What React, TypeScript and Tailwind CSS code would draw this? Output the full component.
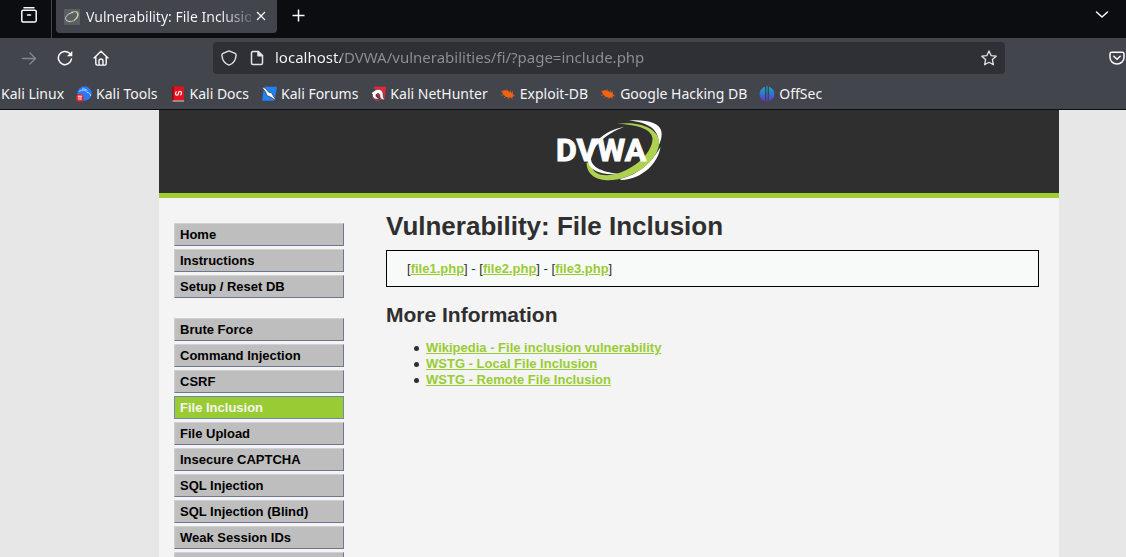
import React from "react";

const LINK = "font-bold text-[#9c3] underline";

function ArchiveIcon() {
  return (
    <svg width="18" height="18" viewBox="0 0 18 18" fill="none" stroke="#fbfbfe" strokeWidth="1.5" strokeLinecap="round" strokeLinejoin="round">
      <path d="M4 1.7h10M1.8 5.5c0-.8.5-1.3 1.3-1.3h11.8c.8 0 1.3.5 1.3 1.3v9c0 .9-.6 1.6-1.6 1.6H3.4c-1 0-1.6-.7-1.6-1.6zM7.5 9h3" />
    </svg>
  );
}

function Favicon() {
  return (
    <svg width="16" height="16" viewBox="0 0 16 16" fill="none">
      <rect width="16" height="16" rx="1" fill="#5b5e64" />
      <path d="M7 3.6C10 2 14.8 2 14.3 6c-.5 4-5.5 7-9.3 6.5" stroke="#a5b86a" strokeWidth="1.2" />
      <path d="M9 3.5C5 4 1.5 7 1.6 9.5c.1 2.5 2.4 3 4.4 3M12 3c3 1.5 1.5 6-2 8.3" stroke="#d4d8cc" />
    </svg>
  );
}

function BugIcon() {
  return (
    <svg width="16" height="16" viewBox="0 0 16 16">
      <path d="M1.8 5.5C4 3.3 7.5 4 10 6.3c1.5-.2 3.2.8 3.4 2.4.3 1.9-1.2 3.2-2.8 2.9C7.3 12.2 2.8 9.5 1.8 5.5z" fill="#f2640f" />
      <path d="M.8 5l4 1.5M.8 9.3l4-.8M4 12l2.5-2.5M8 13.2l1-3M6.5 3.2l2.5 3M10 4l1 3M12.8 5l-.6 2.5M15 10l-3-1M12.500 13l-1.300-2.500" stroke="#d9621c" strokeWidth=".7" fill="none" />
    </svg>
  );
}

function ToolsIcon() {
  return (
    <svg width="16" height="16" viewBox="0 0 16 16" fill="none">
      <circle cx="8.5" cy="7.5" r="7.2" fill="#2a7bfa" />
      <path d="M3 5.5c3-2 6.5-1.5 8 .8 2.5.3 3.5 1.7 3.7 3.7M6 3c2-.3 4 .3 5.5 1.5" stroke="#b9d6ff" strokeWidth="1" />
      <circle cx="3.9" cy="11.8" r="3.9" fill="#e8262d" />
      <path d="M1.7 10.2h4.4M3 10.2v3.8M4.900 10.2v3.800" stroke="#fff" strokeWidth=".9" />
    </svg>
  );
}

function DocsIcon() {
  return (
    <svg width="16" height="16" viewBox="0 0 16 16" fill="none">
      <path d="M2 .5h12v14H2z" fill="#e5121c" />
      <path d="M2 .5h1.8v14H2z" fill="#8f0d14" />
      <path d="M2.5 14.5H14v1H2.5z" fill="#d5d5d8" />
      <path d="M5.500 6.500v1.300c0 1.800 2.700 1.800 2.900 0l.1-1c.2-1.800 2.900-1.800 2.900 0v1.400M5.500 6.300l1.400-.5M11.400 8.500l-1.400.5" stroke="#fff" strokeWidth="1.2" />
    </svg>
  );
}

function ForumsIcon() {
  return (
    <svg width="16" height="16" viewBox="0 0 16 16" fill="none">
      <path d="M3 .8h13l-2.5 14H1z" fill="#2380f5" />
      <path d="M.4.8L4.3 2.300l3.500 4 2.700.5 2 3.500 3 4.700-5-3.500L6 9.500 4.500 5.800z" fill="#fff" stroke="#20242c" strokeWidth=".6" />
    </svg>
  );
}

function NetHunterIcon() {
  return (
    <svg width="16" height="16" viewBox="0 0 16 16" fill="none">
      <path d="M3.500.8H16l-1.500 13H10z" fill="#ee2436" />
      <path d="M.8 7.200L5.500 4c3.500-1.700 7 .2 7.500 3.300.4 2.500-.2 4.200 1.800 6.300-3 .8-4.900-1.200-4.900-4-.2-2.800-2.900-2.600-3.800-.9-.8 1.800 1.500 3.500 3.700 4-4.300 1.700-8.300-.8-7.300-4.500z" fill="#fff" stroke="#20242c" strokeWidth=".6" />
      <path d="M2.600 11c.7 3.200 4.400 4.500 7.400 2.800" stroke="#ee2436" />
    </svg>
  );
}

function OffSecIcon() {
  return (
    <svg width="16" height="16" viewBox="0 0 16 16">
      <defs>
        <linearGradient id="offsec" x1="0" y1="0" x2="0" y2="16" gradientUnits="userSpaceOnUse">
          <stop offset="0" stopColor="#12b5b8" />
          <stop offset=".5" stopColor="#2f74d8" />
          <stop offset="1" stopColor="#6a2ad6" />
        </linearGradient>
      </defs>
      <path d="M5.900.8v14.400C2.800 14 .6 11.500.6 8S2.800 2 5.900.8zM10.100.8v14.400c3.100-1.200 5.300-3.700 5.300-7.200S13.200 2 10.100.8zM7.400.3h1.200v15.400H7.400z" fill="url(#offsec)" />
    </svg>
  );
}

function DvwaLogo() {
  return (
    <svg width="108" height="62" viewBox="0 0 108 62" role="img" aria-label="DVWA">
      <path d="M74 .5C90-.8 105 2 106.5 12c.5 4-.3 8-2.500 13C104 12 98 3 74 .5z" fill="#fff" />
      <path d="M105.500 27C103 43 88 59 66 60l-1-1c18-4 32-17 40.500-32z" fill="#fff" />
      <path d="M62 3.800C84 1 102 8 104 20c2 17-19 35-42 39.500-15 2.500-30-1-30.500-17l4 .5c1.500 12 14 15 30 9.500C83 46 97 32 97.500 19 97.500 10 84 4.500 62 3.800z" fill="#aed250" />
      <path d="M69 7C52 13 37 26 36 37.500c-.5 9 9 14 28 16.500-19 1.500-31-4-31.500-15C32 27 49 10 69 7z" fill="#fff" />
      <text
        x="1"
        y="41"
        fontSize="32"
        fontWeight="700"
        fill="#fff"
        stroke="#fff"
        className="font-['Roboto',sans-serif]"
      >
        DVWA
      </text>
    </svg>
  );
}

const bookmarks: { label: string; icon?: React.ReactNode }[] = [
  { label: "Kali Linux" },
  { label: "Kali Tools", icon: <ToolsIcon /> },
  { label: "Kali Docs", icon: <DocsIcon /> },
  { label: "Kali Forums", icon: <ForumsIcon /> },
  { label: "Kali NetHunter", icon: <NetHunterIcon /> },
  { label: "Exploit-DB", icon: <BugIcon /> },
  { label: "Google Hacking DB", icon: <BugIcon /> },
  { label: "OffSec", icon: <OffSecIcon /> },
];

function Browser() {
  return (
    <div className="shrink-0 border-b border-[#0c0d10] bg-[#42454c] font-['Noto_Sans',sans-serif] text-sm text-[#f4f4f6]">
      <div className="flex h-[38px] items-start bg-[#0c0d10]">
        <div className="flex h-[38px] w-[52px] justify-end border-r border-[#42454c] pr-[13px] pt-1.5">
          <button className="h-[18px]" aria-label="Recent windows">
            <ArchiveIcon />
          </button>
        </div>
        <div className="ml-1 flex h-[33px] w-[221px] items-center rounded-b bg-[#42454c] px-2">
          <Favicon />
          <div className="ml-1.5 flex-1 overflow-hidden whitespace-nowrap bg-[linear-gradient(to_right,#fbfbfe_82%,#65686f)] bg-clip-text text-transparent">
            Vulnerability: File Inclusion
          </div>
          <button className="ml-0.5" aria-label="Close tab">
            <svg width="16" height="16" viewBox="0 0 16 16" fill="none" stroke="#fbfbfe" strokeWidth="1.2">
              <path d="M4 3l8 8M12 3l-8 8" />
            </svg>
          </button>
        </div>
        <button className="ml-3.5 mt-2" aria-label="New tab">
          <svg width="16" height="16" viewBox="0 0 16 16" fill="none" stroke="#fbfbfe" strokeWidth="1.5">
            <path d="M7.5 1.500v12M1.500 7.500h12" />
          </svg>
        </button>
        <button className="ml-auto mr-4 mt-1.5" aria-label="List all tabs">
          <svg width="16" height="16" viewBox="0 0 16 16" fill="none" stroke="#fbfbfe" strokeWidth="1.5" strokeLinecap="round" strokeLinejoin="round">
            <path d="M2.500 6L8 11l5.500-5" />
          </svg>
        </button>
      </div>

      <div className="flex h-10 items-center">
        <div className="flex w-[213px] gap-5 pl-[21px]">
          <button aria-label="Forward">
            <svg width="16" height="16" viewBox="0 0 16 16" fill="none" stroke="#85878c" strokeWidth="1.4" strokeLinecap="round" strokeLinejoin="round">
              <path d="M1.500 8.500h13M9 3l5.500 5.500L9 14" />
            </svg>
          </button>
          <button aria-label="Reload">
            <svg width="16" height="16" viewBox="0 0 16 16" fill="none" stroke="#fbfbfe" strokeWidth="1.5" strokeLinecap="round">
              <path d="M14.500 9A6.600 6.600 0 1 1 12.600 3.300L14 4.600" />
              <path d="M15.300.9v5.400H9.900z" fill="#fbfbfe" stroke="none" />
            </svg>
          </button>
          <button aria-label="Home">
            <svg width="16" height="16" viewBox="0 0 16 16" fill="none" stroke="#fbfbfe" strokeWidth="1.4" strokeLinecap="round" strokeLinejoin="round">
              <path d="M1 8l7-6.800L15 8M2.800 6.600v7c0 .9.5 1.500 1.400 1.500h7.600c.9 0 1.400-.6 1.400-1.500v-7M6 15v-4c0-1.200.8-2 2-2s2 .8 2 2v4" />
            </svg>
          </button>
        </div>
        <div className="flex h-8 min-w-0 flex-1 items-center rounded bg-[#2f3036] px-2">
          <svg width="16" height="16" viewBox="0 0 16 16" fill="none" stroke="#e4e4e8" strokeWidth="1.4" strokeLinejoin="round">
            <path d="M8 .9L14 3.300c1 .4 1.200.9 1.100 2C14.700 10 12 13.900 8 15.200 4 13.900 1.300 10 .9 5.300.8 4.200 1 3.700 2 3.300z" />
          </svg>
          <svg className="ml-3" width="16" height="16" viewBox="0 0 16 16" fill="none" stroke="#e4e4e8" strokeWidth="1.5" strokeLinejoin="round">
            <path d="M9.300 1.500H4c-.9 0-1.500.6-1.500 1.500v10c0 .9.6 1.500 1.500 1.500h8c.9 0 1.500-.6 1.500-1.500V5.500z" />
            <path d="M9 1.500v4.300h4.500z" fill="#e4e4e8" />
          </svg>
          <input
            aria-label="Address"
            className="ml-2.5 min-w-0 flex-1 bg-[linear-gradient(to_right,#fbfbfe_66px,#8f8f95_66px)] bg-clip-text text-[15px] text-transparent outline-none"
            defaultValue="localhost/DVWA/vulnerabilities/fi/?page=include.php"
          />
          <button aria-label="Bookmark this page">
            <svg width="16" height="16" viewBox="0 0 16 16" fill="none" stroke="#e4e4e8" strokeWidth="1.3" strokeLinejoin="round">
              <path d="M8 .9l2.100 4.700 5.100.6-3.800 3.400 1 5.200L8 12.300l-4.400 2.500 1-5.200L.8 6.200l5.100-.6z" />
            </svg>
          </button>
        </div>
        <div className="flex w-[121px] justify-end pr-px">
          <button aria-label="Save to Pocket">
            <svg width="16" height="16" viewBox="0 0 16 16" fill="none" stroke="#fbfbfe" strokeWidth="1.5" strokeLinecap="round" strokeLinejoin="round">
              <path d="M2.700 2.300h10.600c1 0 1.700.6 1.700 1.600V7.300c0 4-3.100 6.600-7 6.600s-7-2.600-7-6.600V3.900c0-1 .7-1.600 1.700-1.600zM4.800 6.300L8 9.300l3.200-3" />
            </svg>
          </button>
        </div>
      </div>

      <nav className="flex h-[31px] items-center gap-3 whitespace-nowrap pl-px">
        {bookmarks.map((b) => (
          <a key={b.label} href="#" className="flex items-center gap-1">
            {b.icon}
            {b.label}
          </a>
        ))}
      </nav>
    </div>
  );
}

const menuGroups = [
  ["Home", "Instructions", "Setup / Reset DB"],
  [
    "Brute Force",
    "Command Injection",
    "CSRF",
    "File Inclusion",
    "File Upload",
    "Insecure CAPTCHA",
    "SQL Injection",
    "SQL Injection (Blind)",
    "Weak Session IDs",
    "XSS (DOM)",
  ],
];

function Menu() {
  return (
    <nav className="flex w-[170px] shrink-0 flex-col gap-5 pt-[25px]">
      {menuGroups.map((group) => (
        <ul key={group[0]} className="flex flex-col gap-[3px]">
          {group.map((label) => (
            <li key={label}>
              <a
                href="#"
                className={
                  label === "File Inclusion"
                    ? "block h-[23px] border border-[#708ab4] bg-[#9c3] pl-[5px] font-bold leading-[21px] text-[#f4f4f4]"
                    : "block h-[23px] border border-b-[#6b7890] border-l-[#d0d0d0] border-r-[#6b7890] border-t-[#d0d0d0] bg-[#bebebe] pl-[5px] font-bold leading-[21px] text-black"
                }
              >
                {label}
              </a>
            </li>
          ))}
        </ul>
      ))}
    </nav>
  );
}

const files = ["file1.php", "file2.php", "file3.php"];
const references = [
  "Wikipedia - File inclusion vulnerability",
  "WSTG - Local File Inclusion",
  "WSTG - Remote File Inclusion",
];

export default function App() {
  return (
    <div className="flex h-screen flex-col overflow-hidden bg-[#e7e7e7]">
      <Browser />
      <div className="min-h-0 flex-1 overflow-hidden pl-[159px] pr-[67px] font-['Liberation_Sans',Arial,sans-serif] text-[13px] text-[#2f2f2f]">
        <div className="flex min-h-full flex-col bg-[#f4f4f4]">
          <header className="flex h-[88px] justify-center border-b-5 border-[#a1cc33] bg-[#2f2f2f] pt-2.5">
            <DvwaLogo />
          </header>
          <div className="flex flex-1 gap-[42px] pl-[15px] pr-5">
            <Menu />
            <main className="min-w-0 flex-1 pt-3">
              <h1 className="text-[26px] font-bold leading-8">Vulnerability: File Inclusion</h1>
              <div className="mt-2 border border-black bg-[#f8fafa] px-5 py-2.5 leading-[15px]">
                {files.map((f, i) => (
                  <React.Fragment key={f}>
                    {i > 0 && " - "}[
                    <a href="#" className={LINK}>
                      {f}
                    </a>
                    ]
                  </React.Fragment>
                ))}
              </div>
              <h2 className="mt-4 text-[21px] font-bold leading-6">More Information</h2>
              <ul className="mt-[13px] pl-7 leading-4">
                {references.map((r) => (
                  <li
                    key={r}
                    className="flex items-center before:mr-[7px] before:size-[5px] before:rounded-full before:bg-[#2f2f2f]"
                  >
                    <a href="#" className={LINK}>
                      {r}
                    </a>
                  </li>
                ))}
              </ul>
            </main>
          </div>
        </div>
      </div>
    </div>
  );
}
